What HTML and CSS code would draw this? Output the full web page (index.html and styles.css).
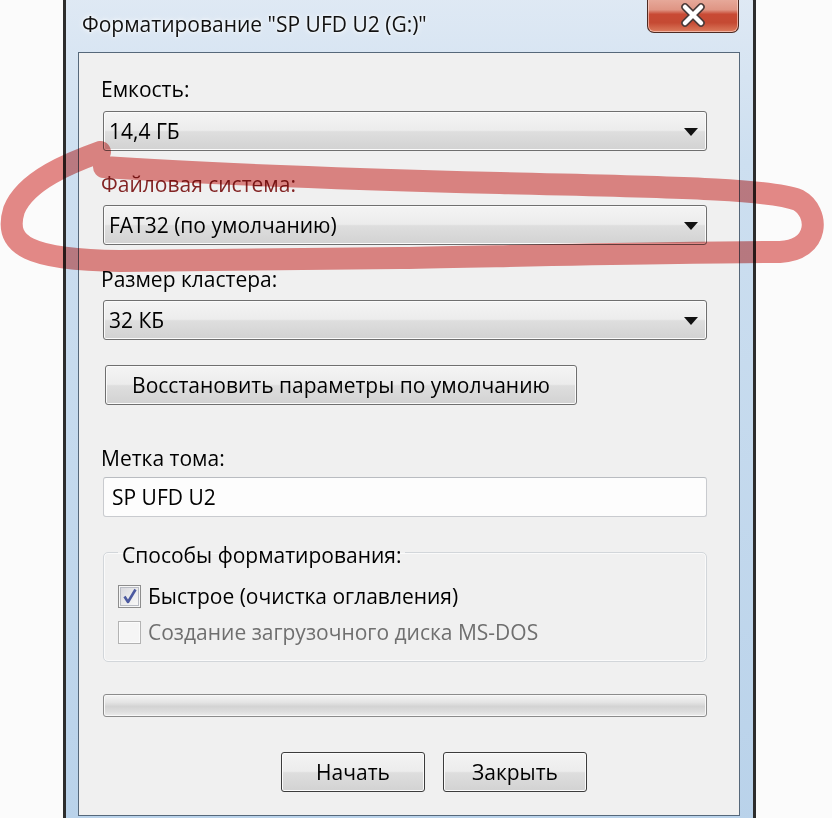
FILE: index.html
```html
<!DOCTYPE html>
<html lang="ru">
<head>
<meta charset="utf-8">
<title>Форматирование</title>
<link rel="stylesheet" href="styles.css">
</head>
<body>
<div class="window">
  <div class="titlebar">
    <div class="title">Форматирование "SP UFD U2 (G:)"</div>
    <div class="close">
      <svg width="30" height="26" viewBox="0 0 30 26">
        <path d="M7 5 L23 21 M23 5 L7 21" stroke="#4a3a38" stroke-width="7.5" stroke-linecap="round" fill="none"/>
        <path d="M7 5 L23 21 M23 5 L7 21" stroke="#ffffff" stroke-width="4.5" stroke-linecap="round" fill="none"/>
      </svg>
    </div>
  </div>
  <div class="client">
    <div class="label l1">Емкость:</div>
    <div class="combo c1"><span>14,4 ГБ</span><i class="arrow"></i></div>
    <div class="label l2 marked">Файловая система:</div>
    <div class="combo c2"><span>FAT32 (по умолчанию)</span><i class="arrow"></i></div>
    <div class="label l3">Размер кластера:</div>
    <div class="combo c3"><span>32 КБ</span><i class="arrow"></i></div>
    <div class="btn restore">Восстановить параметры по умолчанию</div>
    <div class="label l4">Метка тома:</div>
    <div class="input">SP UFD U2</div>
    <fieldset class="group">
      <legend>Способы форматирования:</legend>
      <div class="check-row">
        <span class="box checked">
          <svg width="20" height="20" viewBox="0 0 20 20"><path d="M4.5 10.5 L8 16 L15.5 3.5" stroke="#4c5aa0" stroke-width="2.6" fill="none" stroke-linejoin="round"/></svg>
        </span>
        <span>Быстрое (очистка оглавления)</span>
      </div>
      <div class="check-row disabled">
        <span class="box"></span>
        <span>Создание загрузочного диска MS-DOS</span>
      </div>
    </fieldset>
    <div class="progress"></div>
    <div class="actions">
      <div class="btn action">Начать</div>
      <div class="btn action">Закрыть</div>
    </div>
  </div>
</div>
<svg class="marker" width="832" height="818" viewBox="0 0 832 818">
  <path d="M100 152 C 72 162, 26 180, 14 210 C 3 246, 30 260, 120 261 L 400 258 C 560 255, 690 252, 780 252 C 820 250, 820 212, 798 200 C 768 188, 650 187, 500 183 C 350 179, 220 175, 104 167" stroke="#e68a88" stroke-width="22" stroke-linecap="round" stroke-linejoin="round" fill="none"/>
</svg>
</body>
</html>
```

FILE: styles.css
```css
* { box-sizing: border-box; }

html, body {
  margin: 0;
  padding: 0;
  background: #fbfbfb;
  overflow: hidden;
}

body {
  width: 832px;
  height: 818px;
  position: relative;
  font-family: "Open Sans", "DejaVu Sans", sans-serif;
  font-size: 21px;
  color: #000;
}

.window {
  width: 693px;
  height: 840px;
  margin: -8px 0 0 63px;
  border: 3px solid #2d2d2d;
  border-radius: 9px;
  background: linear-gradient(180deg, #dfe9f4 0%, #cddff0 20%, #b9d2ea 100%);
}

.titlebar {
  height: 57px;
  display: flex;
  align-items: center;
  padding-left: 16px;
}

.title {
  font-size: 21px;
  color: #111;
  text-shadow: 0 0 6px #ffffff, 0 0 3px #ffffff;
}

.close {
  align-self: flex-start;
  margin-left: auto;
  margin-right: 14px;
  width: 92px;
  height: 38px;
  border: 1px solid #4d2a22;
  border-top: none;
  border-radius: 0 0 7px 7px;
  background: linear-gradient(180deg, #eab2a4 0%, #df9584 40%, #c84a34 52%, #c54a33 75%, #dc7c5e 100%);
  box-shadow: inset 0 0 0 1px rgba(255, 220, 210, 0.6);
  display: flex;
  align-items: center;
  justify-content: center;
  padding-top: 2px;
}

.client {
  margin: 0 13px 0 12px;
  height: 764px;
  border: 1px solid #56687a;
  background: #f0f0f0;
  padding: 0 32px 0 24px;
}

.label {
  line-height: 28px;
  height: 28px;
  margin-left: -2px;
  white-space: nowrap;
}

.l1 { margin-top: 22px; }
.l2 { margin-top: 19px; }
.l3 { margin-top: 20px; }
.l4 { margin-top: 39px; }

.marked { color: #832424; }

.combo {
  height: 40px;
  border: 1px solid #6f6f6f;
  border-radius: 3px;
  background: linear-gradient(180deg, #f4f4f4 0%, #ececec 48%, #dedede 52%, #d2d2d2 100%);
  box-shadow: inset 0 0 0 1px #fbfbfb;
  display: flex;
  align-items: center;
  padding: 0 8px 0 5px;
}

.combo span { white-space: nowrap; }

.c1 { margin-top: 8px; }
.c2 { margin-top: 7px; }
.c3 { margin-top: 7px; }

.arrow {
  margin-left: auto;
  width: 0;
  height: 0;
  border-left: 7px solid transparent;
  border-right: 7px solid transparent;
  border-top: 8px solid #111;
  margin-top: 2px;
}

.btn {
  height: 40px;
  border: 1px solid #6f6f6f;
  border-radius: 3px;
  background: linear-gradient(180deg, #f4f4f4 0%, #ececec 48%, #dedede 52%, #d2d2d2 100%);
  box-shadow: inset 0 0 0 1px #fbfbfb;
  display: flex;
  align-items: center;
  justify-content: center;
  white-space: nowrap;
}

.restore {
  width: 472px;
  margin: 25px 0 0 2px;
}

.input {
  margin-top: 5px;
  height: 40px;
  border: 1px solid #c9cbcf;
  border-top-color: #b9bcc1;
  border-radius: 3px;
  background: #fdfdfd;
  display: flex;
  align-items: center;
  padding-left: 8px;
}

.group {
  margin: 18px 0 0 0;
  padding: 9px 14px 11px 14px;
  border: 1px solid #d2d6da;
  border-radius: 5px;
  box-shadow: inset 0 0 0 1px #fafafa;
  min-inline-size: 0;
}

.group legend {
  padding: 6px 4px 0 4px;
  margin-left: 0;
  line-height: 28px;
  white-space: nowrap;
}

.check-row {
  height: 36px;
  display: flex;
  align-items: center;
  gap: 7px;
  white-space: nowrap;
}

.box {
  width: 23px;
  height: 23px;
  border: 1px solid #8d8d8d;
  background: linear-gradient(135deg, #d6d6dc 0%, #eeeeee 60%, #fbfbfb 100%);
  box-shadow: inset 0 0 0 1px #f7f7f7, inset 0 0 0 2px #b9bcc4;
  display: flex;
  align-items: center;
  justify-content: center;
}

.disabled { color: #6f6f6f; }

.disabled .box {
  border-color: #b3b3b3;
  background: #f5f5f5;
  box-shadow: inset 0 0 0 1px #fbfbfb;
}

.progress {
  margin-top: 32px;
  height: 23px;
  border: 1px solid #8b8b8b;
  border-radius: 3px;
  background: linear-gradient(180deg, #f4f4f4 0%, #e4e4e4 35%, #d3d3d3 55%, #dedede 80%, #ececec 100%);
  box-shadow: inset 0 0 0 1px #f8f8f8;
}

.actions {
  margin-top: 35px;
  display: flex;
  gap: 18px;
  padding-left: 178px;
}

.action {
  width: 144px;
  border-color: #3c3c3c;
}

.marker {
  position: absolute;
  left: 0;
  top: 0;
  pointer-events: none;
  mix-blend-mode: multiply;
}
```
